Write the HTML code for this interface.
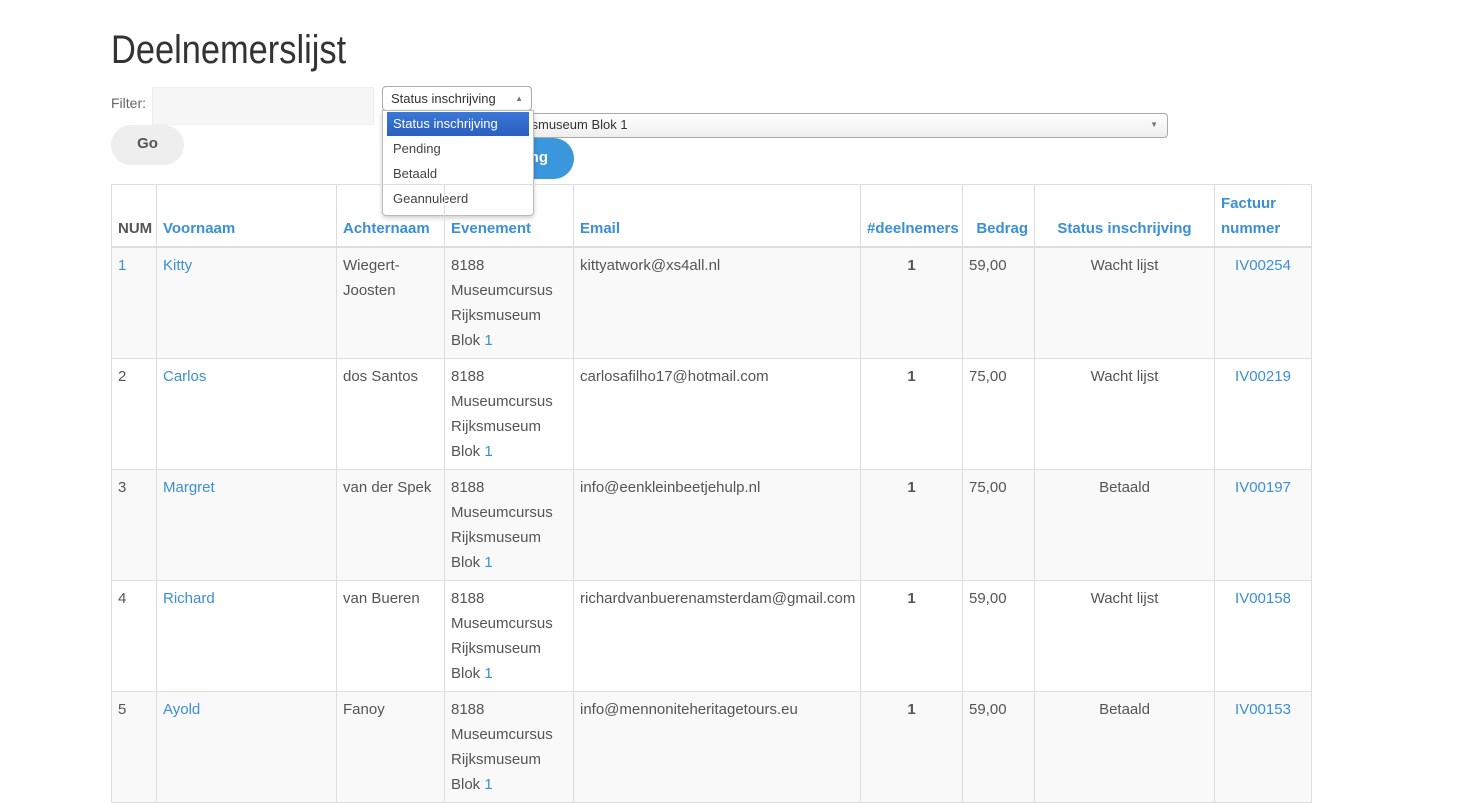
<!DOCTYPE html>
<html><head><meta charset="utf-8"><style>
*{box-sizing:border-box}
body{margin:0;background:#fff;font-family:"Liberation Sans",sans-serif;color:#555;width:1476px;height:771px;overflow:hidden;position:relative}
.abs{position:absolute}
h1{position:absolute;left:111px;top:28px;margin:0;font-family:"Liberation Sans Narrow","Liberation Sans",sans-serif;font-weight:normal;font-size:40px;color:#333;transform:scaleX(0.86);transform-origin:left top;letter-spacing:0}
table{position:absolute;left:111px;top:184px;border-collapse:collapse;table-layout:fixed;width:1200px;font-size:15px}
td,th{border:1px solid #ddd;padding:5px 6px;line-height:25px;vertical-align:top}
th{vertical-align:bottom;color:#3a8fd6;font-weight:bold;text-align:left;border-bottom:2px solid #ddd;height:62px}
tbody tr:nth-child(odd){background:#f9f9f9}
td{height:111px}
a{color:#3a8fd6;text-decoration:none}
.c{text-align:center}
</style></head><body>
<h1>Deelnemerslijst</h1>
<div class="abs" style="left:111px;top:95px;font-size:14px;color:#666">Filter:</div>
<div class="abs" style="left:152px;top:87px;width:222px;height:38px;background:#f6f6f6;border:1px solid #eee"></div>
<div class="abs" style="left:111px;top:125px;width:73px;height:40px;background:#eee;border-radius:20px;font-weight:bold;font-size:15px;color:#555;text-align:center;line-height:38px">Go</div>
<div class="abs" style="left:480px;top:113px;width:688px;height:25px;border:1px solid #aaa;border-radius:4px;background:linear-gradient(#fff,#eee);font-size:13px;color:#333;line-height:22px;padding-left:44px">ksmuseum Blok 1<span style="position:absolute;right:9px;top:0;font-size:8px;color:#777">▼</span></div>
<div class="abs" style="left:440px;top:138px;width:134px;height:41px;background:#3a97dc;border-radius:21px;color:#fff;font-weight:bold;font-size:15px;line-height:40px;text-align:right;padding-right:26px">ng</div>
<div class="abs" style="left:382px;top:86px;width:150px;height:25px;border:1px solid #aaa;border-radius:4px;background:#fff;font-size:13px;color:#333;line-height:23px;padding-left:8px">Status inschrijving<span style="position:absolute;right:8px;top:0;font-size:8px;color:#777">▲</span></div>
<div class="abs" style="left:382px;top:110px;width:152px;height:106px;border:1px solid #bbb;border-radius:0 0 4px 4px;background:#fff;box-shadow:0 2px 5px rgba(0,0,0,.2);font-size:13px;color:#444;padding:1px 4px">
<div style="background:linear-gradient(#3b78d8,#2b5fc0);color:#fff;height:24px;line-height:24px;padding-left:6px">Status inschrijving</div>
<div style="height:25px;line-height:25px;padding-left:6px">Pending</div>
<div style="height:25px;line-height:25px;padding-left:6px">Betaald</div>
<div style="height:25px;line-height:25px;padding-left:6px">Geannuleerd</div>
</div>
<table>
<colgroup><col style="width:45px"><col style="width:180px"><col style="width:108px"><col style="width:129px"><col style="width:287px"><col style="width:102px"><col style="width:72px"><col style="width:180px"><col style="width:97px"></colgroup>
<thead><tr><th style="color:#555">NUM</th><th>Voornaam</th><th>Achternaam</th><th>Evenement</th><th>Email</th><th>#deelnemers</th><th style="text-align:right">Bedrag</th><th class="c">Status inschrijving</th><th>Factuur nummer</th></tr></thead>
<tbody>
<tr><td><a>1</a></td><td><a>Kitty</a></td><td>Wiegert-Joosten</td><td>8188 Museumcursus Rijksmuseum Blok <a>1</a></td><td>kittyatwork@xs4all.nl</td><td class="c"><b>1</b></td><td>59,00</td><td class="c">Wacht lijst</td><td class="c"><a>IV00254</a></td></tr>
<tr><td>2</td><td><a>Carlos</a></td><td>dos Santos</td><td>8188 Museumcursus Rijksmuseum Blok <a>1</a></td><td>carlosafilho17@hotmail.com</td><td class="c"><b>1</b></td><td>75,00</td><td class="c">Wacht lijst</td><td class="c"><a>IV00219</a></td></tr>
<tr><td>3</td><td><a>Margret</a></td><td>van der Spek</td><td>8188 Museumcursus Rijksmuseum Blok <a>1</a></td><td>info@eenkleinbeetjehulp.nl</td><td class="c"><b>1</b></td><td>75,00</td><td class="c">Betaald</td><td class="c"><a>IV00197</a></td></tr>
<tr><td>4</td><td><a>Richard</a></td><td>van Bueren</td><td>8188 Museumcursus Rijksmuseum Blok <a>1</a></td><td>richardvanbuerenamsterdam@gmail.com</td><td class="c"><b>1</b></td><td>59,00</td><td class="c">Wacht lijst</td><td class="c"><a>IV00158</a></td></tr>
<tr><td>5</td><td><a>Ayold</a></td><td>Fanoy</td><td>8188 Museumcursus Rijksmuseum Blok <a>1</a></td><td>info@mennoniteheritagetours.eu</td><td class="c"><b>1</b></td><td>59,00</td><td class="c">Betaald</td><td class="c"><a>IV00153</a></td></tr>
</tbody></table>
</body></html>
